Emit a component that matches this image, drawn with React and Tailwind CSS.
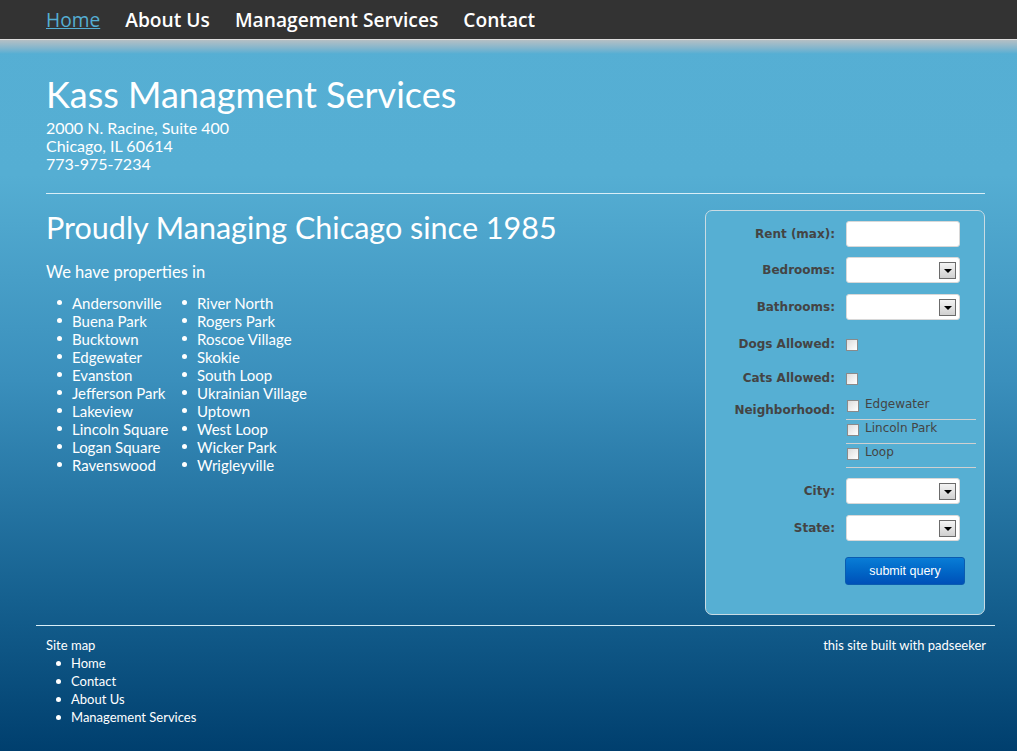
import { useState } from 'react';

const hoods = [
  ['Andersonville', 'River North'],
  ['Buena Park', 'Rogers Park'],
  ['Bucktown', 'Roscoe Village'],
  ['Edgewater', 'Skokie'],
  ['Evanston', 'South Loop'],
  ['Jefferson Park', 'Ukrainian Village'],
  ['Lakeview', 'Uptown'],
  ['Lincoln Square', 'West Loop'],
  ['Logan Square', 'Wicker Park'],
  ['Ravenswood', 'Wrigleyville'],
];

const navLinks = ['Home', 'About Us', 'Management Services', 'Contact'];

function FakeSelect() {
  return (
    <div className="w-[114px] h-[26px] bg-white rounded-[3px] border border-[#d8d8d8] flex items-center justify-end pr-[3px]">
      <div className="w-[17px] h-[17px] border border-[#6b6b6b] bg-gradient-to-b from-[#f4f4f4] to-[#d0d0d0] flex items-center justify-center pt-[1px]">
        <div className="w-0 h-0 border-l-[4px] border-r-[4px] border-t-[4px] border-l-transparent border-r-transparent border-t-black" />
      </div>
    </div>
  );
}

function Check() {
  return (
    <div className="w-[12px] h-[12px] shrink-0 border border-[#8a8a8a] bg-gradient-to-br from-[#dcdcdc] to-white" />
  );
}

function Label({ children, className = '' }) {
  return (
    <div className={`w-[140px] text-right pr-[11px] text-[12px] leading-[15px] font-bold text-[#444] ${className}`}>
      {children}
    </div>
  );
}

function Row({ label, children, className = '' }) {
  return (
    <div className={`flex items-center ${className}`}>
      <Label>{label}</Label>
      {children}
    </div>
  );
}

export default function App() {
  const [rent, setRent] = useState('');

  return (
    <div className="w-[1017px] h-[751px] overflow-hidden bg-[linear-gradient(to_bottom,#56afd4_0px,#55aed3_175px,#3a8fbc_380px,#15608f_600px,#003f6e_751px)] text-white font-['Lato',sans-serif]">
      {/* top nav */}
      <nav className="h-[40px] bg-[#333] border-b border-[#ddd] flex items-center gap-[25px] pl-[46px] font-['Open_Sans',sans-serif]">
        {navLinks.map((l, i) => (
          <a
            key={l}
            href="#"
            className={`text-[19.2px] leading-none ${i === 0 ? 'text-[#55aed3] underline' : 'text-white font-semibold'}`}
          >
            {l}
          </a>
        ))}
      </nav>
      <div className="h-[14px] bg-gradient-to-b from-[#b4bfc4] to-[#55aed3]" />

      <div className="pl-[46px] pr-[32px] pt-[20px]">
        <h1 className="text-[36px] leading-[40px]">Kass Managment Services</h1>
        <div className="text-[16px] leading-[18px] mt-[5px]">
          <p>2000 N. Racine, Suite 400</p>
          <p>Chicago, IL 60614</p>
          <p>773-975-7234</p>
        </div>
        <hr className="border-0 border-t border-[#d9eef7] mt-[20px]" />

        <div className="flex justify-between mt-[15px]">
          <div>
            <h2 className="text-[30.5px] leading-[36px]">Proudly Managing Chicago since 1985</h2>
            <p className="text-[16.5px] mt-[15px]">We have properties in</p>
            <div className="grid grid-cols-[125px_auto] mt-[9px] pl-[26px] text-[15px] leading-[18px]">
              {hoods.map((h) =>
                h.map((n) => (
                  <div key={n} className="flex items-center">
                    <span className="w-[5px] h-[5px] rounded-full bg-white ml-[-15px] mr-[10px]" />
                    {n}
                  </div>
                ))
              )}
            </div>
          </div>

          {/* search form */}
          <form className="w-[280px] h-[405px] mt-[1px] bg-[#56afd3] border border-[#c9dbe3] rounded-[7px] pt-[10px] flex flex-col font-['DejaVu_Sans',sans-serif]">
            <Row label="Rent (max):">
              <input
                value={rent}
                onChange={(e) => setRent(e.target.value)}
                className="w-[114px] h-[26px] bg-white rounded-[3px] border border-[#d8d8d8] outline-none text-black px-1"
              />
            </Row>
            <Row label="Bedrooms:" className="mt-[10px]"><FakeSelect /></Row>
            <Row label="Bathrooms:" className="mt-[11px]"><FakeSelect /></Row>
            <Row label="Dogs Allowed:" className="mt-[17px]"><Check /></Row>
            <Row label="Cats Allowed:" className="mt-[19px]"><Check /></Row>
            <div className="flex mt-[10px]">
              <Label className="pt-[7px]">Neighborhood:</Label>
              <div className="w-[130px]">
                {['Edgewater', 'Lincoln Park', 'Loop'].map((n) => (
                  <div key={n} className="flex items-start gap-[6px] h-[24px] border-b border-[#d0d0d0] pl-[1px] pt-[4px]">
                    <Check />
                    <span className="text-[12px] leading-[12px] text-[#444] mt-[-2px]">{n}</span>
                  </div>
                ))}
              </div>
            </div>
            <Row label="City:" className="mt-[10px]"><FakeSelect /></Row>
            <Row label="State:" className="mt-[11px]"><FakeSelect /></Row>
            <div className="pl-[139px] mt-[16px]">
              <button
                type="button"
                className="w-[120px] h-[28px] rounded-[3px] border border-[#0a5cb0] bg-gradient-to-b from-[#0a7dd6] to-[#0050b8] text-white text-[12.5px] font-['Liberation_Sans',sans-serif]"
              >
                submit query
              </button>
            </div>
          </form>
        </div>
      </div>

      {/* footer */}
      <footer className="ml-[36px] mr-[22px] mt-[10px] border-t border-[#d9eef7] pt-[10px] pl-[10px] pr-[9px] flex justify-between text-[13px] leading-[18px]">
        <div>
          <p>Site map</p>
          <div className="pl-[25px]">
            {['Home', 'Contact', 'About Us', 'Management Services'].map((l) => (
              <div key={l} className="flex items-center">
                <span className="w-[5px] h-[5px] rounded-full bg-white ml-[-15px] mr-[10px]" />
                {l}
              </div>
            ))}
          </div>
        </div>
        <p>this site built with padseeker</p>
      </footer>
    </div>
  );
}
